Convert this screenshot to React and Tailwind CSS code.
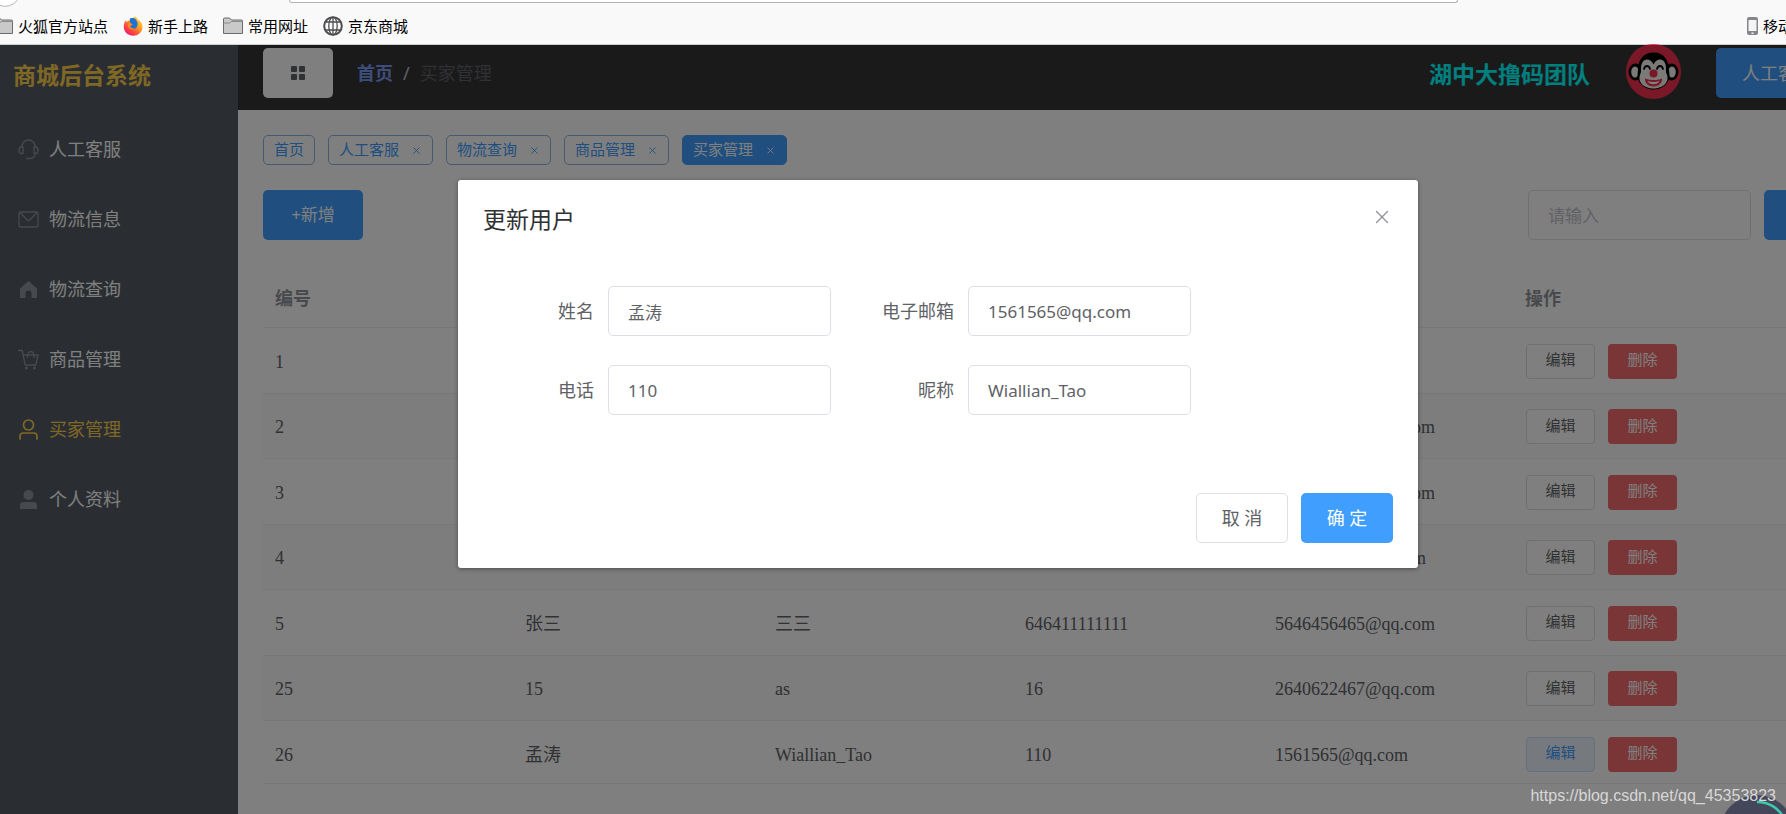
import { useState } from 'react'
import { X } from 'lucide-react'

const MENU = [
  { name: '人工客服', icon: 'service' },
  { name: '物流信息', icon: 'message' },
  { name: '物流查询', icon: 'home' },
  { name: '商品管理', icon: 'cart' },
  { name: '买家管理', icon: 'user' },
  { name: '个人资料', icon: 'userSolid' },
]

const TAGS = ['首页', '人工客服', '物流查询', '商品管理', '买家管理']

const USERS = [
  { id: 1, name: '李四', nick: '小四', phone: '110', email: '156156@qq.com' },
  { id: 2, name: '王五', nick: '小五', phone: '13511111111', email: '2640622467@qq.com' },
  { id: 3, name: '赵六', nick: '小六', phone: '13522222222', email: '2640622467@qq.com' },
  { id: 4, name: '张三', nick: '小三', phone: '13533333333', email: '264062246@qq.com' },
  { id: 5, name: '张三', nick: '三三', phone: '646411111111', email: '5646456465@qq.com' },
  { id: 25, name: '15', nick: 'as', phone: '16', email: '2640622467@qq.com' },
  { id: 26, name: '孟涛', nick: 'Wiallian_Tao', phone: '110', email: '1561565@qq.com' },
]

const FIELDS = [
  { key: 'name', label: '姓名' },
  { key: 'email', label: '电子邮箱' },
  { key: 'phone', label: '电话' },
  { key: 'nick', label: '昵称' },
]

export default function App() {
  const [editing, setEditing] = useState(USERS[6])

  return (
    <div className="relative h-screen overflow-hidden bg-white font-['Noto_Sans','Noto_Sans_CJK_SC',sans-serif] text-lg">
      <div className="flex h-full w-[calc(100%+112px)] flex-col">
        <BrowserBar />
        <div className="relative flex min-h-0 flex-1">
          <Sidebar />
          <div className="flex min-w-0 flex-1 flex-col">
            <Header />
            <main className="flex-1 p-[25px]">
              <Tags />
              <div className="mt-[25px] flex justify-between">
                <button className="h-[50px] w-[100px] rounded-[5px] bg-[#409eff] text-[17px] text-white">+新增</button>
                <div className="flex gap-[13px]">
                  <input
                    aria-label="搜索"
                    placeholder="请输入"
                    className="h-[50px] w-[223px] rounded-[5px] border border-[#dcdfe6] bg-transparent px-[19px] text-[17px] placeholder:text-[#c0c4cc]"
                  />
                  <button aria-label="查询" className="h-[50px] w-[109px] rounded-[5px] bg-[#409eff]" />
                </div>
              </div>
              <UserTable active={editing?.id} onEdit={setEditing} />
            </main>
          </div>
          {editing && <EditDialog user={editing} onClose={() => setEditing(null)} />}
        </div>
      </div>

      {/* Floating speed widget */}
      <svg className="absolute right-0 bottom-0" width="64" height="20" viewBox="0 0 64 20">
        <circle cx="35" cy="38" r="37" fill="#44465a" />
        <path d="M35 8a30 30 0 0 1 27 16" fill="none" stroke="#3fc9ae" strokeWidth="2.5" />
      </svg>
      <p className="absolute right-[10px] bottom-[6px] font-['Liberation_Sans',sans-serif] text-base leading-6 text-[#d8d7d8]">
        https://blog.csdn.net/qq_45353823
      </p>
    </div>
  )
}

function BrowserBar() {
  return (
    <div className="shrink-0 border-b border-[#cfcfd2] bg-[#f9f9fa] text-[15px] text-black">
      <div className="flex h-[7px] items-start">
        <svg width="18" height="7" viewBox="0 0 18 7">
          <path d="M17.500 0A15.500 15.500 0 0 1 0 5.500V0Z" fill="#fff" />
          <path d="M17.500 0A15.500 15.500 0 0 1 0 5.500" fill="none" stroke="#b5b5b8" />
        </svg>
        <div className="mr-[440px] ml-[271px] h-[3px] flex-1 rounded-b-[3px] border-x border-b border-[#b5b5b8] bg-white" />
      </div>
      <div className="flex h-[37px] items-center justify-between pt-[2px] pr-[15px]">
        <div className="-ml-[7px] flex items-center gap-[15px]">
          <Bookmark icon={<FolderIcon />}>火狐官方站点</Bookmark>
          <Bookmark icon={<FirefoxIcon />}>新手上路</Bookmark>
          <Bookmark icon={<FolderIcon />}>常用网址</Bookmark>
          <Bookmark icon={<GlobeIcon />}>京东商城</Bookmark>
        </div>
        <Bookmark icon={<PhoneIcon />}>移动设备上的书签</Bookmark>
      </div>
    </div>
  )
}

function Bookmark({ icon, children }) {
  return (
    <a href="#" className="flex items-center gap-[5px] whitespace-nowrap">
      {icon}
      {children}
    </a>
  )
}

function Sidebar() {
  return (
    <aside className="w-[238px] shrink-0 bg-[#545c64]">
      <h1 className="flex h-[61px] items-center pl-[13px] text-[23px] font-bold text-[#ffd04b]">商城后台系统</h1>
      <nav className="mt-2">
        {MENU.map(item => (
          <a
            key={item.name}
            href="#"
            className={`flex h-[70px] items-center gap-[10px] pl-[18px] ${
              item.name === '买家管理' ? 'text-[#ffd04b]' : 'text-white'
            }`}
          >
            <span className={item.name === '买家管理' ? 'text-[#ffd04b]' : 'text-[#909399]'}>
              <MenuIcon name={item.icon} />
            </span>
            {item.name}
          </a>
        ))}
      </nav>
    </aside>
  )
}

function Header() {
  return (
    <header className="flex h-[65px] shrink-0 items-start justify-between bg-[#363436] px-[25px] pt-[3px]">
      <div className="flex h-[50px] items-center">
        <button aria-label="菜单" className="flex h-[50px] w-[70px] items-center justify-center rounded-[5px] bg-white text-[#606266]">
          <svg width="14" height="14" viewBox="0 0 14 14" fill="currentColor">
            <rect width="6" height="6" rx="1" />
            <rect x="8" width="6" height="6" rx="1" />
            <rect y="8" width="6" height="6" rx="1" />
            <rect x="8" y="8" width="6" height="6" rx="1" />
          </svg>
        </button>
        <a href="#" className="ml-6 font-bold text-[#7a9bf5]">首页</a>
        <span className="mx-[10px] text-[#c0c4cc]">/</span>
        <span className="text-[#606266]">买家管理</span>
      </div>
      <div className="flex h-[50px] items-center">
        <span className="pt-[3px] text-[23px] font-bold text-[#00ffff]">湖中大撸码团队</span>
        <span className="mb-1 ml-[36px] h-[55px] w-[55px]">
          <MonkeyAvatar />
        </span>
        <button className="ml-[35px] h-[50px] w-[157px] rounded-[5px] bg-[#409eff] pl-[26px] text-left text-white">人工客服</button>
      </div>
    </header>
  )
}

function Tags() {
  return (
    <div className="flex gap-[13px]">
      {TAGS.map(tag => (
        <span
          key={tag}
          className={`flex h-[30px] items-center rounded-[5px] border px-[10px] text-[15px] ${
            tag === '买家管理' ? 'border-[#409eff] bg-[#409eff] text-white' : 'border-[#8fb4e0] text-[#409eff]'
          }`}
        >
          {tag}
          {tag !== '首页' && (
            <button aria-label={`关闭${tag}`} className="ml-3">
              <X size={11} strokeWidth={2} />
            </button>
          )}
        </span>
      ))}
    </div>
  )
}

function UserTable({ active, onEdit }) {
  return (
    <div className="mt-[25px] -mr-[25px] h-[519px] overflow-hidden border-b border-[#ebeef5] font-['Liberation_Serif','Noto_Sans_CJK_SC',serif] text-[#606266]">
      <table className="w-full table-fixed">
        <thead>
          <tr className="h-[62px] border-b border-[#ebeef5] text-left text-[#909399]">
            <th className="w-[250px] px-3 pt-[6px]">编号</th>
            <th className="w-[250px] px-3 pt-[6px]">姓名</th>
            <th className="w-[250px] px-3 pt-[6px]">昵称</th>
            <th className="w-[250px] px-3 pt-[6px]">电话</th>
            <th className="w-[250px] px-3 pt-[6px]">邮箱</th>
            <th className="px-3 pt-[6px]">操作</th>
          </tr>
        </thead>
        <tbody>
          {USERS.map(user => (
            <tr key={user.id} className="border-b border-[#ebeef5] odd:h-[66px] even:h-[65px] even:bg-[#fafafa]">
              <td className="px-3 pt-[3px]">{user.id}</td>
              <td className="px-3 pt-[3px]">{user.name}</td>
              <td className="px-3 pt-[3px]">{user.nick}</td>
              <td className="px-3 pt-[3px]">{user.phone}</td>
              <td className="px-3 pt-[3px]">{user.email}</td>
              <td className="px-[13px] pt-[2px]">
                <div className="flex gap-[13px] text-[15px]">
                  <button
                    onClick={() => onEdit(user)}
                    className={`h-[35px] w-[69px] rounded-[4px] border ${
                      user.id === active ? 'border-[#c6e2ff] bg-[#ecf5ff] text-[#409eff]' : 'border-[#dcdfe6] bg-white'
                    }`}
                  >
                    编辑
                  </button>
                  <button className="h-[35px] w-[69px] rounded-[4px] bg-[#f56c6c] text-white">删除</button>
                </div>
              </td>
            </tr>
          ))}
        </tbody>
      </table>
    </div>
  )
}

function EditDialog({ user, onClose }) {
  const [form, setForm] = useState(user)

  return (
    <div className="absolute inset-y-0 right-0 -left-[22px] flex items-start justify-center bg-black/50 pt-[135px]">
      <div role="dialog" aria-label="更新用户" className="w-1/2 rounded-[3px] bg-white p-[25px] text-[#606266] shadow-[0_1px_4px_rgba(0,0,0,0.4)]">
        <div className="flex h-[30px] items-center justify-between">
          <h2 className="text-[23px] text-[#303133]">更新用户</h2>
          <button aria-label="关闭" onClick={onClose} className="h-6 self-start text-[#909399]">
            <X size={22} strokeWidth={1.5} />
          </button>
        </div>
        <form className="mt-[51px] grid grid-cols-[323px_323px] gap-x-[37px] gap-y-[29px] pl-[25px]">
          {FIELDS.map(field => (
            <div key={field.key} className="flex items-center">
              <label htmlFor={field.key} className="w-[100px] pr-[14px] text-right">{field.label}</label>
              <input
                id={field.key}
                value={form[field.key]}
                onChange={e => setForm({ ...form, [field.key]: e.target.value })}
                className="h-[50px] w-[223px] rounded-[5px] border border-[#dcdfe6] px-[19px] text-[17px]"
              />
            </div>
          ))}
        </form>
        <div className="mt-[78px] flex justify-end gap-[13px]">
          <button onClick={onClose} className="h-[50px] w-[92px] rounded-[5px] border border-[#dcdfe6]">取 消</button>
          <button onClick={onClose} className="h-[50px] w-[92px] rounded-[5px] bg-[#409eff] text-white">确 定</button>
        </div>
      </div>
    </div>
  )
}

function MenuIcon({ name }) {
  const line = { fill: 'none', stroke: 'currentColor', strokeWidth: 1.3, strokeLinecap: 'round', strokeLinejoin: 'round' }
  return (
    <svg width="21" height="21" viewBox="0 0 21 21">
      {name === 'service' && (
        <g {...line}>
          <path d="M4 7.500C4 3.500 7 1 10.500 1S17 3.500 17 7.500" />
          <path d="M5 8v6.500H3.500C2 14.500 1 13 1 11.200S2 8 3.500 8ZM16 8v6.500h1.500c1.500 0 2.500-1.500 2.500-3.300S19 8 17.500 8Z" />
          <path d="M17 14.500c0 3-2 5-5 5H8.500" />
        </g>
      )}
      {name === 'message' && (
        <g {...line}>
          <rect x="1" y="3" width="19" height="15" rx="1.500" />
          <path d="m2 3.500 7.300 7.500a1.700 1.700 0 0 0 2.400 0L19 3.500" />
        </g>
      )}
      {name === 'home' && (
        <path fill="currentColor" d="M10.500 2 19 9.500V19h-5.500v-4.500a3 3 0 0 0-6 0V19H2V9.500Z" />
      )}
      {name === 'cart' && (
        <g {...line}>
          <path d="M.7 1.500h3.600L7.200 16h10.600L20 6H5.300" />
          <path d="M9.500 8.500c0-4 1.200-6 3.300-6s3.300 2 3.300 6" />
          <circle cx="8.500" cy="19" r="0.900" fill="currentColor" />
          <circle cx="16.500" cy="19" r="0.900" fill="currentColor" />
        </g>
      )}
      {name === 'user' && (
        <g {...line} strokeWidth="1.700">
          <circle cx="10.500" cy="6" r="5" />
          <path d="M2 20v-2.500C2 15.500 3.500 14 5.500 14h10c2 0 3.500 1.500 3.500 3.500V20" />
        </g>
      )}
      {name === 'userSolid' && (
        <g fill="currentColor">
          <circle cx="10.500" cy="6" r="5" />
          <path d="M2 20v-3.500C2 14 3.500 13 5.500 13h10c2 0 3.500 1 3.500 3.500V20Z" />
        </g>
      )}
    </svg>
  )
}

function MonkeyAvatar() {
  return (
    <svg width="55" height="55" viewBox="0 0 55 55">
      <circle cx="27.500" cy="27.500" r="27.500" fill="#f5304f" />
      <ellipse cx="9.500" cy="28" rx="7" ry="8.500" fill="#000" />
      <ellipse cx="45.500" cy="28" rx="7" ry="8.500" fill="#000" />
      <ellipse cx="9" cy="28" rx="3.800" ry="5.500" fill="#f4f4f0" />
      <ellipse cx="46" cy="28" rx="3.800" ry="5.500" fill="#f4f4f0" />
      <path d="M27.500 8.500c-10 0-15.500 7.500-15.500 17 0 2-.5 4-.5 6 0 8 7.500 14 16 14s16-6 16-14c0-2-.5-4-.5-6 0-9.500-5.500-17-15.500-17Z" fill="#000" />
      <path d="M27.500 20.500c-1.500-3.500-4-5-6.500-5-4 0-6 4-6 9 0 2.500.3 3.500-.7 5.500C11 38 18 44.500 27.500 44.500S44 38 40.700 30c-1-2-.7-3-.7-5.500 0-5-2-9-6-9-2.500 0-5 1.500-6.500 5Z" fill="#f4f4f0" />
      <path d="M18 25c1-4 5-4 6 0M31 25c1-4 5-4 6 0" fill="none" stroke="#000" strokeWidth="1.800" strokeLinecap="round" />
      <circle cx="27.500" cy="29.500" r="4" fill="#f5304f" />
      <path d="M19 34.500c5.500 2 11.500 2 17 0 .5 4.500-3.500 8-8.500 8s-9-3.500-8.500-8Z" fill="#f5304f" />
      <path d="M21.500 37c4 1.300 8 1.300 12 0-1 2.500-3.500 3.200-6 3.200s-5-.7-6-3.200Z" fill="#fff" />
    </svg>
  )
}

function FolderIcon() {
  return (
    <svg width="20" height="18" viewBox="0 0 20 18" fill="#c9c9c9" stroke="#6b6b6b">
      <path d="M.5 16.500V2A1 1 0 0 1 1.500 1H6.500L8.500 3H18.500A1 1 0 0 1 19.500 4V16.500Z" />
      <path d="M.5 6H6.500L8.500 4.500H19.500" fill="none" stroke="#8a8a8a" />
    </svg>
  )
}

function FirefoxIcon() {
  return (
    <svg width="20" height="20" viewBox="0 0 20 20">
      <defs>
        <linearGradient id="fox" x1="1" y1="0" x2="0.200" y2="1">
          <stop offset="0" stopColor="#fff04a" />
          <stop offset="0.450" stopColor="#ff9a1f" />
          <stop offset="0.800" stopColor="#ff3647" />
          <stop offset="1" stopColor="#e31587" />
        </linearGradient>
      </defs>
      <path d="M12 .5c1.500 1 2.300 2 2.800 3C18 5 19.500 8 19.500 11c0 5-4.200 8.800-9.300 8.800S.8 16 .8 10.800C.8 8 1.500 6 3 4.300L3.500 6 6 4.500Z" fill="url(#fox)" />
      <path d="M7 2.500c3-1.500 7 .5 7.500 4.500.4 4-2 6.500-5 6-2-.3-3-1.500-3.500-3l3.500-1-2.500-2.500Z" fill="#1b73d8" />
      <path d="M5 7.500c2-.5 3 .2 4.500.5-.5 1.500-2 1.500-2.300 2.700 1 1.800 3 1.500 4.500.8-1 2.500-5.700 2.500-6.700-1Z" fill="#ff8a1c" />
    </svg>
  )
}

function GlobeIcon() {
  return (
    <svg width="20" height="20" viewBox="0 0 20 20" fill="none" stroke="#4d4d4f" strokeWidth="1.300">
      <circle cx="10" cy="10" r="8.800" strokeWidth="2" />
      <ellipse cx="10" cy="10" rx="4.200" ry="8.800" />
      <path d="M10 1v18M2.500 6h15M2.500 14h15" />
    </svg>
  )
}

function PhoneIcon() {
  return (
    <svg width="11" height="18" viewBox="0 0 11 18">
      <rect width="11" height="18" rx="2" fill="#85858a" />
      <rect x="1.500" y="3" width="8" height="11" fill="#f4f4f6" />
      <rect x="4.500" y="15.500" width="2" height="1.500" fill="#f4f4f6" />
    </svg>
  )
}
